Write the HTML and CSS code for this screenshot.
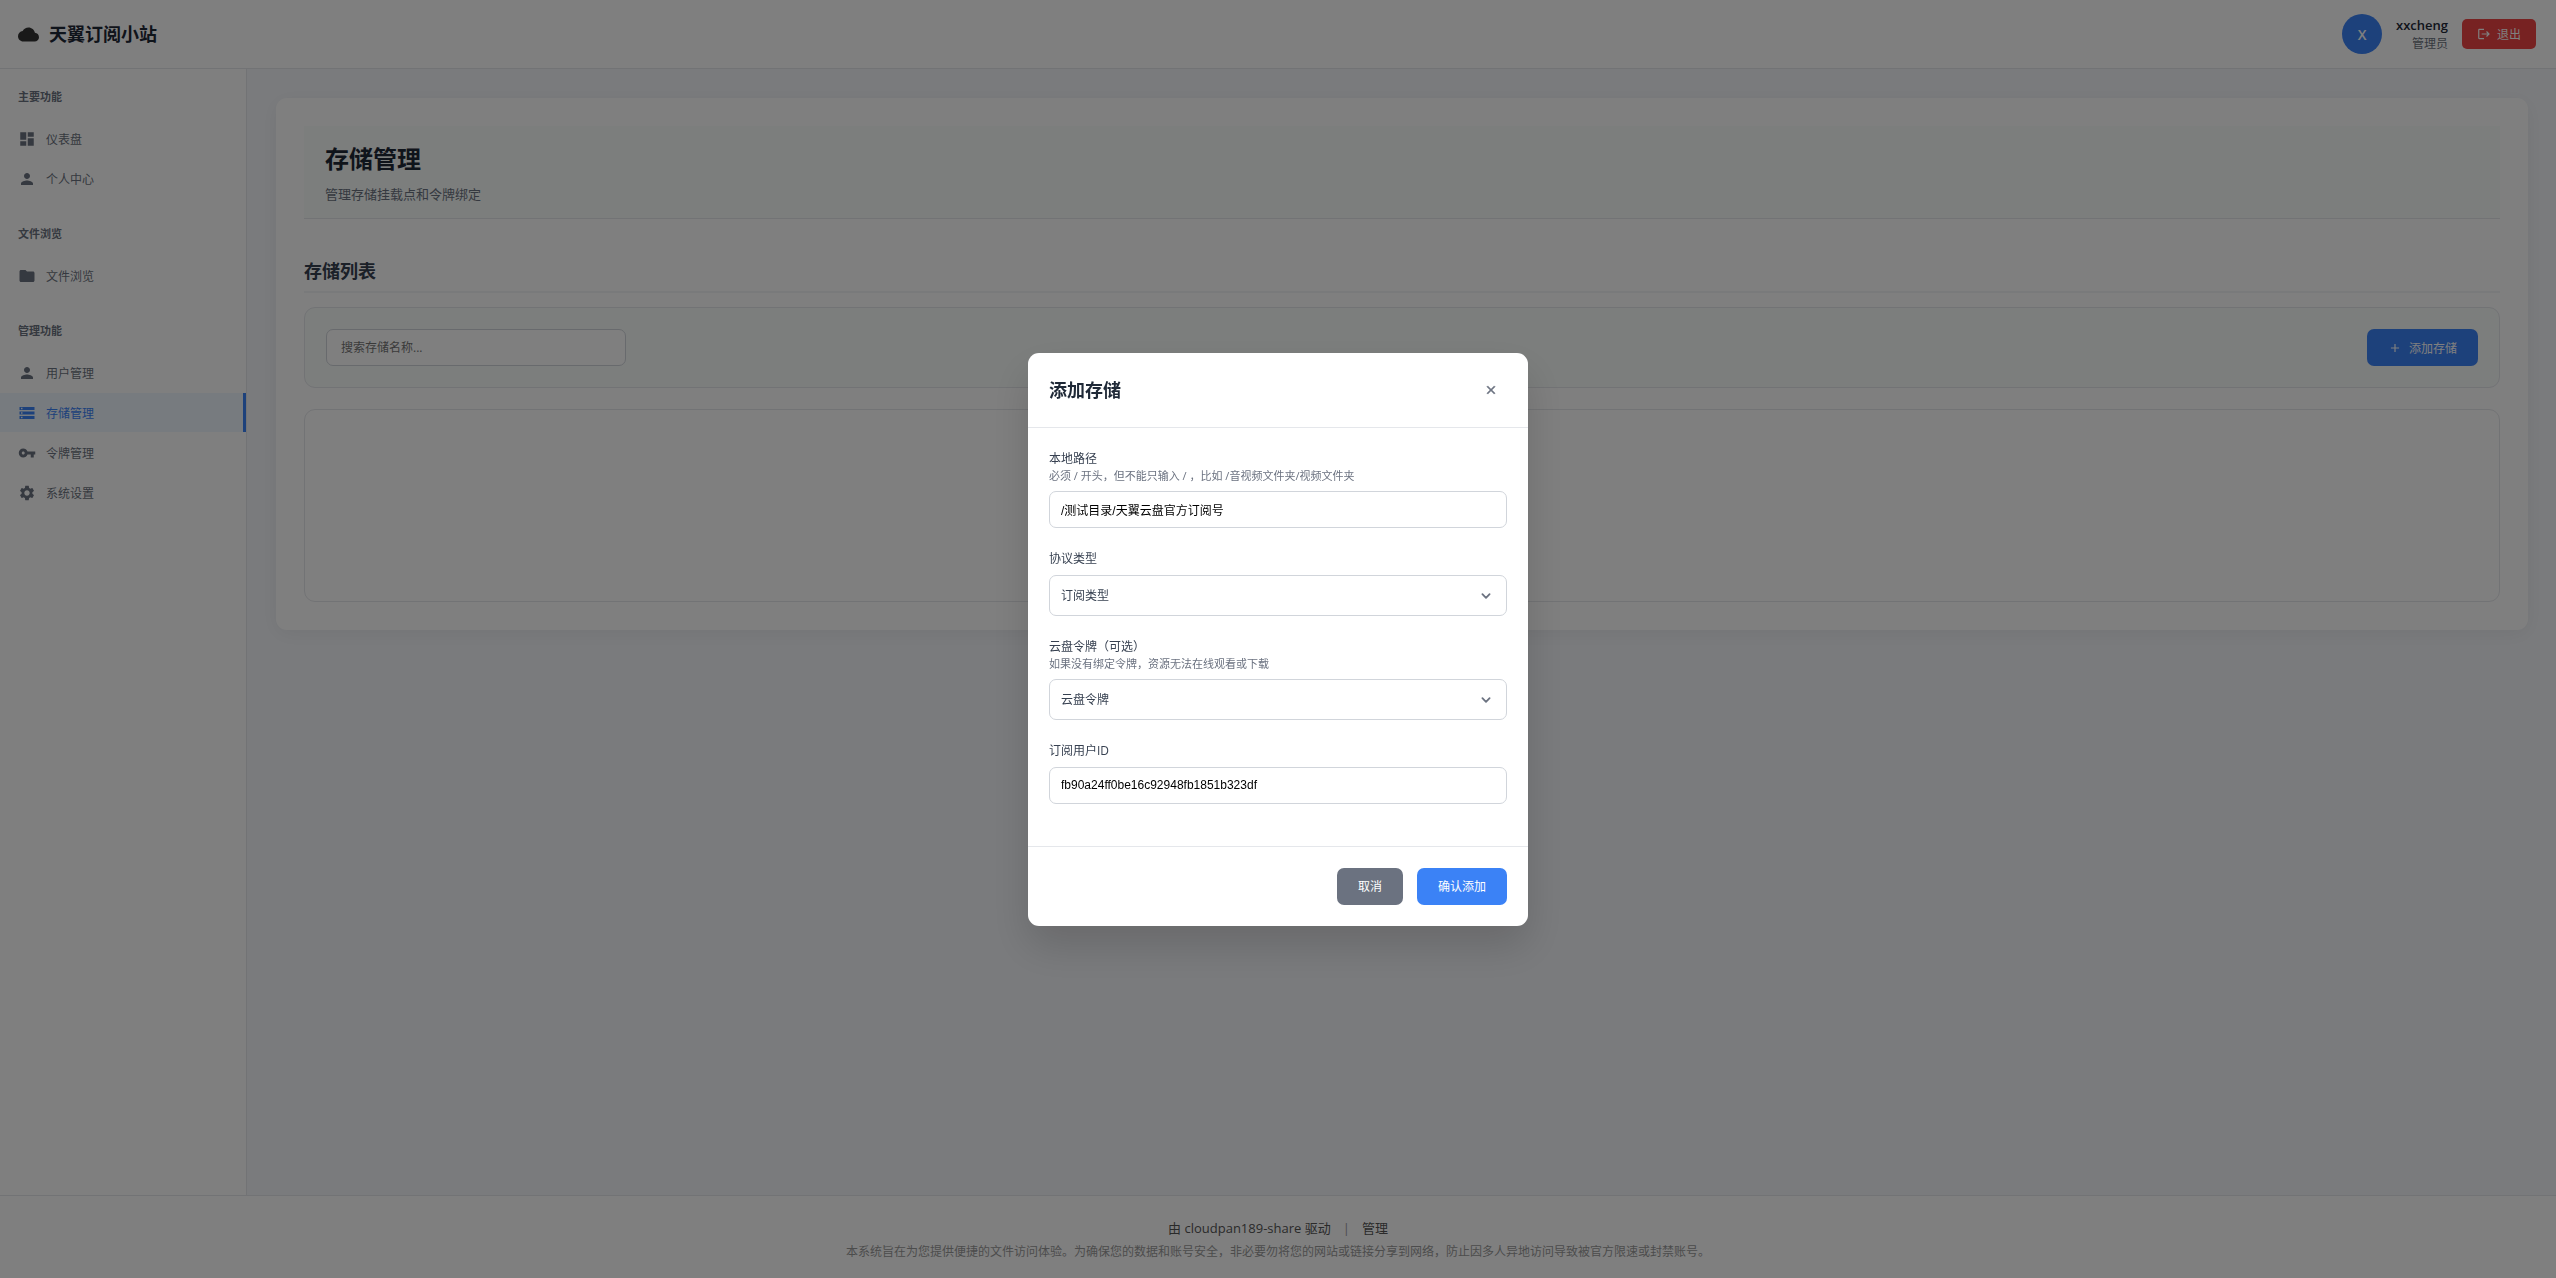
FILE: index.html
```html
<!DOCTYPE html>
<html lang="zh-CN">
<head>
    <meta charset="UTF-8">
    <meta name="viewport" content="width=device-width, initial-scale=1.0">
    <title>天翼订阅小站</title>
    <link rel="stylesheet" href="styles.css">
</head>
<body>
    <header class="header">
        <div class="logo">
            <svg class="logo-icon" viewBox="0 0 24 24" fill="currentColor"><path d="M19.35 10.04C18.67 6.59 15.64 4 12 4 9.11 4 6.6 5.64 5.35 8.04 2.34 8.36 0 10.91 0 14c0 3.31 2.69 6 6 6h13c2.76 0 5-2.24 5-5 0-2.64-2.05-4.78-4.65-4.96z"/></svg>
            <h1>天翼订阅小站</h1>
        </div>
        <div class="user-info">
            <div class="avatar">X</div>
            <div class="user-details">
                <span class="user-name">xxcheng</span>
                <span class="user-role">管理员</span>
            </div>
            <button class="logout-btn" type="button">
                <svg class="btn-icon" viewBox="0 0 24 24" fill="currentColor"><path d="M17 7l-1.41 1.41L18.17 11H8v2h10.17l-2.58 2.58L17 17l5-5zM4 5h8V3H4c-1.1 0-2 .9-2 2v14c0 1.1.9 2 2 2h8v-2H4V5z"/></svg>
                退出
            </button>
        </div>
    </header>

    <div class="layout">
        <nav class="sidebar">
            <div class="nav-section">
                <h3 class="nav-title">主要功能</h3>
                <a class="nav-item" href="#dashboard">
                    <svg viewBox="0 0 24 24" fill="currentColor"><path d="M3 13h8V3H3v10zm0 8h8v-6H3v6zm10 0h8V11h-8v10zm0-18v6h8V3h-8z"/></svg>
                    仪表盘
                </a>
                <a class="nav-item" href="#profile">
                    <svg viewBox="0 0 24 24" fill="currentColor"><path d="M12 12c2.21 0 4-1.79 4-4s-1.79-4-4-4-4 1.79-4 4 1.79 4 4 4zm0 2c-2.67 0-8 1.34-8 4v2h16v-2c0-2.66-5.33-4-8-4z"/></svg>
                    个人中心
                </a>
            </div>
            <div class="nav-section">
                <h3 class="nav-title">文件浏览</h3>
                <a class="nav-item" href="#files">
                    <svg viewBox="0 0 24 24" fill="currentColor"><path d="M10 4H4c-1.1 0-1.99.9-1.99 2L2 18c0 1.1.9 2 2 2h16c1.1 0 2-.9 2-2V8c0-1.1-.9-2-2-2h-8l-2-2z"/></svg>
                    文件浏览
                </a>
            </div>
            <div class="nav-section">
                <h3 class="nav-title">管理功能</h3>
                <a class="nav-item" href="#users">
                    <svg viewBox="0 0 24 24" fill="currentColor"><path d="M12 12c2.21 0 4-1.79 4-4s-1.79-4-4-4-4 1.79-4 4 1.79 4 4 4zm0 2c-2.67 0-8 1.34-8 4v2h16v-2c0-2.66-5.33-4-8-4z"/></svg>
                    用户管理
                </a>
                <a class="nav-item active" href="#storage">
                    <svg viewBox="0 0 24 24" fill="currentColor"><path d="M2 20h20v-4H2v4zm2-3h2v2H4v-2zM2 4v4h20V4H2zm4 3H4V5h2v2zm-4 7h20v-4H2v4zm2-3h2v2H4v-2z"/></svg>
                    存储管理
                </a>
                <a class="nav-item" href="#tokens">
                    <svg viewBox="0 0 24 24" fill="currentColor"><path d="M12.65 10C11.83 7.67 9.61 6 7 6c-3.31 0-6 2.69-6 6s2.69 6 6 6c2.61 0 4.83-1.67 5.65-4H17v4h4v-4h2v-4H12.65zM7 14c-1.1 0-2-.9-2-2s.9-2 2-2 2 .9 2 2-.9 2-2 2z"/></svg>
                    令牌管理
                </a>
                <a class="nav-item" href="#settings">
                    <svg viewBox="0 0 24 24" fill="currentColor"><path d="M19.14 12.94c.04-.3.06-.61.06-.94 0-.32-.02-.64-.07-.94l2.03-1.58c.18-.14.23-.41.12-.61l-1.92-3.32c-.12-.22-.37-.29-.59-.22l-2.39.96c-.5-.38-1.03-.7-1.62-.94l-.36-2.54c-.04-.24-.24-.41-.48-.41h-3.84c-.24 0-.43.17-.47.41l-.36 2.54c-.59.24-1.13.57-1.62.94l-2.39-.96c-.22-.08-.47 0-.59.22L2.74 8.87c-.12.21-.08.47.12.61l2.03 1.58c-.05.3-.09.63-.09.94s.02.64.07.94l-2.03 1.58c-.18.14-.23.41-.12.61l1.92 3.32c.12.22.37.29.59.22l2.39-.96c.5.38 1.03.7 1.62.94l.36 2.54c.05.24.24.41.48.41h3.84c.24 0 .44-.17.47-.41l.36-2.54c.59-.24 1.13-.56 1.62-.94l2.39.96c.22.08.47 0 .59-.22l1.92-3.32c.12-.22.07-.47-.12-.61l-2.01-1.58zM12 15.6c-1.98 0-3.6-1.62-3.6-3.6s1.62-3.6 3.6-3.6 3.6 1.62 3.6 3.6-1.62 3.6-3.6 3.6z"/></svg>
                    系统设置
                </a>
            </div>
        </nav>

        <main class="main">
            <div class="card">
                <div class="page-header">
                    <h2>存储管理</h2>
                    <p>管理存储挂载点和令牌绑定</p>
                </div>
                <h3 class="section-title">存储列表</h3>
                <div class="toolbar">
                    <input class="search-input" type="text" placeholder="搜索存储名称..." aria-label="搜索存储名称">
                    <button class="btn btn-primary" type="button">
                        <svg class="btn-icon" viewBox="0 0 24 24" fill="currentColor"><path d="M19 13h-6v6h-2v-6H5v-2h6V5h2v6h6v2z"/></svg>
                        添加存储
                    </button>
                </div>
                <div class="storage-list"></div>
            </div>
        </main>
    </div>

    <footer class="footer">
        <div class="footer-links">
            <a href="#project">由 cloudpan189-share 驱动</a>
            <span class="divider">|</span>
            <a href="#admin">管理</a>
        </div>
        <p>本系统旨在为您提供便捷的文件访问体验。为确保您的数据和账号安全，非必要勿将您的网站或链接分享到网络，防止因多人异地访问导致被官方限速或封禁账号。</p>
    </footer>

    <!-- 添加存储弹窗 -->
    <div class="modal-overlay">
        <form class="modal" role="dialog" aria-modal="true" aria-labelledby="modal-title">
            <div class="modal-header">
                <h3 id="modal-title">添加存储</h3>
                <button class="close-btn" type="button" aria-label="关闭">
                    <svg viewBox="0 0 24 24" fill="currentColor" stroke="currentColor"><path d="M19 6.41L17.59 5 12 10.59 6.41 5 5 6.41 10.59 12 5 17.59 6.41 19 12 13.41 17.59 19 19 17.59 13.41 12z"/></svg>
                </button>
            </div>
            <div class="modal-body">
                <div class="form-group">
                    <label for="local-path">本地路径</label>
                    <small>必须 / 开头，但不能只输入 / ，比如 /音视频文件夹/视频文件夹</small>
                    <input class="form-input" id="local-path" type="text" value="/测试目录/天翼云盘官方订阅号">
                </div>
                <div class="form-group">
                    <label for="protocol">协议类型</label>
                    <div class="select-wrap">
                        <select class="form-select" id="protocol">
                            <option>订阅类型</option>
                        </select>
                        <svg class="select-arrow" viewBox="0 0 20 20"><path d="M6 8l4 4 4-4"/></svg>
                    </div>
                </div>
                <div class="form-group">
                    <label for="token">云盘令牌（可选）</label>
                    <small>如果没有绑定令牌，资源无法在线观看或下载</small>
                    <div class="select-wrap">
                        <select class="form-select" id="token">
                            <option>云盘令牌</option>
                        </select>
                        <svg class="select-arrow" viewBox="0 0 20 20"><path d="M6 8l4 4 4-4"/></svg>
                    </div>
                </div>
                <div class="form-group">
                    <label for="user-id">订阅用户ID</label>
                    <input class="form-input" id="user-id" type="text" value="fb90a24ff0be16c92948fb1851b323df">
                </div>
            </div>
            <div class="modal-footer">
                <button class="btn btn-secondary" type="button">取消</button>
                <button class="btn btn-primary" type="submit">确认添加</button>
            </div>
        </form>
    </div>
</body>
</html>
```

FILE: styles.css
```css
* {
    box-sizing: border-box;
    margin: 0;
    padding: 0;
}
body {
    min-height: 100vh;
    display: flex;
    flex-direction: column;
    font-family: "Open Sans", "Noto Sans CJK SC", sans-serif;
    font-size: 12px;
    color: #1f2937;
    background: #f5f7fb;
}
a {
    color: inherit;
    text-decoration: none;
}
button {
    font-family: inherit;
    font-size: 12px;
    border: none;
    cursor: pointer;
}
svg {
    display: block;
    flex-shrink: 0;
}

/* Header */
.header {
    display: flex;
    justify-content: space-between;
    align-items: center;
    height: 69px;
    padding: 0 20px 0 18px;
    background: #fff;
    border-bottom: 1px solid #e5e7eb;
}
.logo {
    display: flex;
    align-items: center;
    gap: 10px;
    color: #333;
}
.logo-icon {
    width: 21px;
    height: 21px;
}
.logo h1 {
    font-size: 18px;
    line-height: 24px;
    font-weight: 600;
    color: #1f2937;
}
.user-info {
    display: flex;
    align-items: center;
    gap: 14px;
}
.avatar {
    display: flex;
    align-items: center;
    justify-content: center;
    width: 40px;
    height: 40px;
    border-radius: 50%;
    background: #3b82f6;
    color: #fff;
    font-size: 14px;
    font-weight: 600;
}
.user-details {
    display: flex;
    flex-direction: column;
    align-items: flex-end;
}
.user-name {
    font-size: 13px;
    line-height: 20px;
    font-weight: 600;
}
.user-role {
    line-height: 18px;
    color: #6b7280;
}
.logout-btn {
    display: flex;
    align-items: center;
    gap: 6px;
    height: 30px;
    padding: 0 15px;
    border-radius: 5px;
    background: #ef4444;
    color: #fff;
}
.btn-icon {
    width: 14px;
    height: 14px;
}

/* Sidebar */
.layout {
    flex: 1;
    display: flex;
}
.sidebar {
    display: flex;
    flex-direction: column;
    gap: 28px;
    width: 247px;
    flex-shrink: 0;
    padding: 20px 0;
    background: #fff;
    border-right: 1px solid #e5e7eb;
}
.nav-section {
    display: flex;
    flex-direction: column;
    gap: 1px;
}
.nav-title {
    margin-bottom: 13px;
    padding: 0 18px;
    font-size: 11px;
    line-height: 16px;
    font-weight: 600;
    color: #6b7280;
}
.nav-item {
    display: flex;
    align-items: center;
    gap: 10px;
    height: 39px;
    padding: 0 18px;
    color: #6b7280;
}
.nav-item svg {
    width: 18px;
    height: 18px;
}
.nav-item.active {
    background: #eff6ff;
    color: #3b82f6;
    border-right: 3px solid #3b82f6;
}

/* Main content */
.main {
    flex: 1;
    padding: 29px 28px 29px 29px;
}
.card {
    padding: 28px;
    background: #fff;
    border-radius: 11px;
    box-shadow: 0 4px 20px rgba(0, 0, 0, 0.06);
}
.page-header {
    margin-bottom: 38px;
    padding: 16px 21px;
    background: #f8fcfa;
    border-bottom: 1px solid #e5e7eb;
}
.page-header h2 {
    margin-bottom: 10px;
    font-size: 24px;
    line-height: 34px;
    font-weight: 700;
}
.page-header p {
    font-size: 13px;
    line-height: 16px;
    color: #6b7280;
}
.section-title {
    margin-bottom: 14px;
    padding-bottom: 6px;
    font-size: 18px;
    line-height: 28px;
    font-weight: 600;
    color: #374151;
    border-bottom: 2px solid #f3f4f6;
}
.toolbar {
    display: flex;
    justify-content: space-between;
    align-items: center;
    margin-bottom: 21px;
    padding: 21px;
    background: #f8fcfa;
    border: 1px solid #e5e7eb;
    border-radius: 11px;
}
.search-input {
    width: 300px;
    height: 37px;
    padding: 0 14px;
    font-family: inherit;
    font-size: 12px;
    background: #fff;
    border: 1px solid #d1d5db;
    border-radius: 7px;
}
.search-input::placeholder {
    color: #757575;
}
.storage-list {
    min-height: 193px;
    border: 1px solid #e5e7eb;
    border-radius: 11px;
}

/* Buttons */
.btn {
    display: flex;
    align-items: center;
    gap: 7px;
    height: 37px;
    padding: 0 21px;
    border-radius: 7px;
    color: #fff;
}
.btn-primary {
    background: #3b82f6;
}
.btn-secondary {
    background: #6b7280;
}

/* Footer */
.footer {
    padding: 22px 21px 18px;
    background: #fff;
    border-top: 1px solid #e5e7eb;
    text-align: center;
    color: #999;
}
.footer-links {
    display: flex;
    justify-content: center;
    gap: 12px;
    margin-bottom: 5px;
    font-size: 13px;
    line-height: 20px;
}
.footer-links a {
    color: #555;
}
.footer p {
    line-height: 17px;
}

/* Modal */
.modal-overlay {
    position: fixed;
    inset: 0;
    display: flex;
    align-items: center;
    justify-content: center;
    background: rgba(0, 0, 0, 0.5);
}
.modal {
    width: 500px;
    max-width: 90%;
    background: #fff;
    border-radius: 11px;
    box-shadow: 0 20px 40px rgba(0, 0, 0, 0.15);
}
.modal-header {
    display: flex;
    justify-content: space-between;
    align-items: center;
    padding: 21px;
    border-bottom: 1px solid #e5e7eb;
}
.modal-header h3 {
    font-size: 18px;
    line-height: 32px;
    font-weight: 600;
}
.close-btn {
    display: flex;
    align-items: center;
    justify-content: center;
    width: 32px;
    height: 32px;
    background: none;
    color: #6b7280;
}
.close-btn svg {
    width: 14px;
    height: 14px;
}
.modal-body {
    padding: 21px;
}
.form-group {
    margin-bottom: 21px;
}
.form-group label {
    display: block;
    line-height: 19px;
    color: #374151;
}
.form-group small {
    display: block;
    font-size: 11px;
    line-height: 16px;
    color: #6b7280;
}
.form-input,
.form-select {
    display: block;
    width: 100%;
    margin-top: 7px;
    padding: 0 11px;
    font-size: 12px;
    background: #fff;
    border: 1px solid #d1d5db;
    border-radius: 7px;
}
.form-input {
    height: 37px;
    font-family: "Liberation Sans", "Noto Sans CJK SC", sans-serif;
    color: #000;
}
.form-select {
    height: 41px;
    font-family: inherit;
    color: #374151;
    appearance: none;
}
.select-wrap {
    position: relative;
}
.select-arrow {
    position: absolute;
    top: 12px;
    right: 12px;
    width: 18px;
    height: 18px;
    fill: none;
    stroke: #6b7280;
    stroke-width: 2;
    stroke-linecap: round;
    stroke-linejoin: round;
    pointer-events: none;
}
.modal-footer {
    display: flex;
    justify-content: flex-end;
    gap: 14px;
    padding: 21px;
    border-top: 1px solid #e5e7eb;
}
```
